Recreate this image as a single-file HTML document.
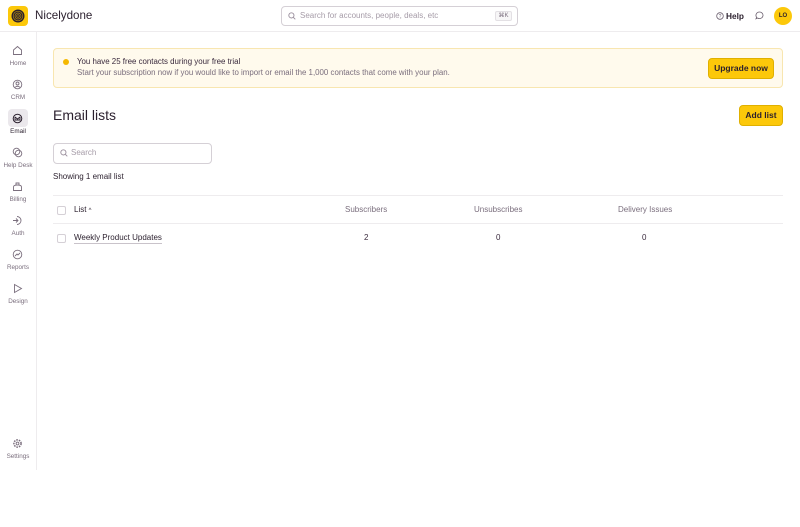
<!DOCTYPE html>
<html><head><style>
*{box-sizing:border-box;margin:0;padding:0}
body{width:800px;height:527px;background:#fff;font-family:"Liberation Sans",sans-serif;color:#2a1f2d;position:relative;overflow:hidden;line-height:1}
.a{position:absolute;white-space:nowrap}
.hdr{left:0;top:0;width:800px;height:32px;border-bottom:1px solid #eeecee}
.side{left:0;top:32px;width:37px;height:438px;border-right:1px solid #eeecee}
.ic{position:absolute;left:12px}
.lb{position:absolute;left:0;width:36px;text-align:center;font-size:6.3px;color:#7a6e7d}
.btn{background:#fcc80a;border:1px solid #e0b000;border-radius:4px;font-size:8.5px;font-weight:bold;color:#2a1f2d;text-align:center}
.th{font-size:8px;color:#7a6e7d}
.cb{width:9px;height:9px;border:1px solid #d5d0d6;border-radius:2px}
</style></head><body>
<div class="a hdr"></div>
<div class="a" style="left:8px;top:6px;width:20px;height:20px;background:#fcc80a;border-radius:4px">
<svg width="20" height="20" viewBox="0 0 20 20"><circle cx="10" cy="10" r="6.5" fill="#2a1f2d"/><circle cx="10" cy="10" r="4.8" fill="none" stroke="#b08a10" stroke-width=".7"/><circle cx="10" cy="10" r="3" fill="none" stroke="#b08a10" stroke-width=".7"/><circle cx="10" cy="10" r="1.3" fill="none" stroke="#b08a10" stroke-width=".7"/></svg></div>
<div class="a" style="left:35px;top:10px;font-size:11.6px">Nicelydone</div>
<div class="a" style="left:281px;top:6px;width:237px;height:20px;border:1px solid #d5d0d6;border-radius:4px"></div>
<svg class="a" style="left:288px;top:12px" width="8" height="8" viewBox="0 0 8 8"><circle cx="3.4" cy="3.4" r="2.6" fill="none" stroke="#9a8f9d" stroke-width=".9"/><path d="M5.3 5.3L7.3 7.3" stroke="#9a8f9d" stroke-width=".9"/></svg>
<div class="a" style="left:300px;top:12px;font-size:8px;color:#a69ca8">Search for accounts, people, deals, etc</div>
<div class="a" style="left:495px;top:11px;width:17px;height:10px;border:1px solid #e3e0e4;border-radius:2px;font-size:6px;color:#7a6e7d;text-align:center;line-height:8px;background:#f7f6f7">⌘K</div>
<svg class="a" style="left:716px;top:12px" width="8" height="8" viewBox="0 0 8 8"><circle cx="4" cy="4" r="3.3" fill="none" stroke="#6b5f6e" stroke-width=".8"/><text x="4" y="5.8" font-size="5" text-anchor="middle" fill="#6b5f6e">?</text></svg>
<div class="a" style="left:726px;top:12px;font-size:8.3px;font-weight:bold">Help</div>
<svg class="a" style="left:755px;top:11px" width="9" height="9" viewBox="0 0 9 9"><path d="M4.5 1a3.5 3.3 0 1 1-2 6L1 7.8l.6-1.6A3.5 3.3 0 0 1 4.5 1z" fill="none" stroke="#6b5f6e" stroke-width=".8"/></svg>
<div class="a" style="left:774px;top:7px;width:18px;height:18px;border-radius:50%;background:#fcc80a;font-size:6px;font-weight:bold;text-align:center;line-height:18px">LO</div>

<div class="a side"></div>
<div class="a" style="left:8px;top:109px;width:20px;height:18px;background:#ebe8ec;border-radius:4px"></div>
<svg class="ic" style="top:45px" width="11" height="11" viewBox="0 0 11 11"><path d="M1.5 5L5.5 1.5 9.5 5v4.5h-8z" fill="none" stroke="#7a6e7d" stroke-width=".9"/></svg><div class="lb" style="top:61px">Home</div>
<svg class="ic" style="top:79px" width="11" height="11" viewBox="0 0 11 11"><circle cx="5.5" cy="5.5" r="4.3" fill="none" stroke="#7a6e7d" stroke-width=".9"/><circle cx="5.5" cy="4.5" r="1.5" fill="none" stroke="#7a6e7d" stroke-width=".9"/><path d="M3 8.3q2.5-2 5 0" fill="none" stroke="#7a6e7d" stroke-width=".9"/></svg><div class="lb" style="top:95px">CRM</div>
<svg class="ic" style="top:113px" width="11" height="11" viewBox="0 0 11 11"><circle cx="5.5" cy="5.5" r="4.3" fill="none" stroke="#2a1f2d" stroke-width="1"/><path d="M3 4l2.5 2 2.5-2M3 4v3h5V4" fill="none" stroke="#2a1f2d" stroke-width=".9"/></svg><div class="lb" style="top:129px;color:#2a1f2d">Email</div>
<svg class="ic" style="top:147px" width="11" height="11" viewBox="0 0 11 11"><circle cx="4.5" cy="4.5" r="3.3" fill="none" stroke="#7a6e7d" stroke-width=".9"/><circle cx="6.5" cy="6.5" r="3.3" fill="none" stroke="#7a6e7d" stroke-width=".9"/></svg><div class="lb" style="top:163px">Help Desk</div>
<svg class="ic" style="top:181px" width="11" height="11" viewBox="0 0 11 11"><path d="M1.5 9.5h8V6q0-2-4-2t-4 2z M4 4V2h3v2" fill="none" stroke="#7a6e7d" stroke-width=".9"/></svg><div class="lb" style="top:197px">Billing</div>
<svg class="ic" style="top:215px" width="11" height="11" viewBox="0 0 11 11"><path d="M5 1.5a4 4 0 1 1 0 8M1 5.5h5M4 3.5l2 2-2 2" fill="none" stroke="#7a6e7d" stroke-width=".9"/></svg><div class="lb" style="top:231px">Auth</div>
<svg class="ic" style="top:249px" width="11" height="11" viewBox="0 0 11 11"><circle cx="5.5" cy="5.5" r="4.3" fill="none" stroke="#7a6e7d" stroke-width=".9"/><path d="M3 7l2-2 1 1 2-2" fill="none" stroke="#7a6e7d" stroke-width=".9"/></svg><div class="lb" style="top:265px">Reports</div>
<svg class="ic" style="top:283px" width="11" height="11" viewBox="0 0 11 11"><path d="M2.5 1.5l7 4-7 4z" fill="none" stroke="#7a6e7d" stroke-width=".9"/></svg><div class="lb" style="top:299px">Design</div>
<svg class="ic" style="top:438px" width="11" height="11" viewBox="0 0 11 11"><circle cx="5.5" cy="5.5" r="3.6" fill="none" stroke="#7a6e7d" stroke-width="1.5" stroke-dasharray="1.6 1"/><circle cx="5.5" cy="5.5" r="1.4" fill="none" stroke="#7a6e7d" stroke-width=".9"/></svg><div class="lb" style="top:454px">Settings</div>

<div class="a" style="left:53px;top:48px;width:730px;height:40px;background:#fffaed;border:1px solid #f8e6b0;border-radius:4px"></div>
<div class="a" style="left:63px;top:59px;width:6px;height:6px;border-radius:50%;background:#f5b800"></div>
<div class="a" style="left:77px;top:58px;font-size:7.9px;color:#3a2a3d">You have 25 free contacts during your free trial</div>
<div class="a" style="left:77px;top:69px;font-size:7.9px;color:#7a6e7d">Start your subscription now if you would like to import or email the 1,000 contacts that come with your plan.</div>
<div class="a btn" style="left:708px;top:58px;width:66px;height:21px;line-height:19px">Upgrade now</div>

<div class="a" style="left:53px;top:108px;font-size:14px">Email lists</div>
<div class="a btn" style="left:739px;top:105px;width:44px;height:21px;line-height:19px">Add list</div>

<div class="a" style="left:53px;top:143px;width:159px;height:21px;border:1px solid #d5d0d6;border-radius:4px"></div>
<svg class="a" style="left:60px;top:149px" width="8" height="8" viewBox="0 0 8 8"><circle cx="3.4" cy="3.4" r="2.6" fill="none" stroke="#9a8f9d" stroke-width=".9"/><path d="M5.3 5.3L7.3 7.3" stroke="#9a8f9d" stroke-width=".9"/></svg>
<div class="a" style="left:71px;top:149px;font-size:8px;color:#a69ca8">Search</div>
<div class="a" style="left:53px;top:173px;font-size:8px">Showing 1 email list</div>

<div class="a" style="left:53px;top:195px;width:730px;height:1px;background:#eeecee"></div>
<div class="a" style="left:53px;top:223px;width:730px;height:1px;background:#eeecee"></div>
<div class="a cb" style="left:57px;top:206px"></div>
<div class="a" style="left:74px;top:206px;font-size:8px">List <span style="font-size:6px">^</span></div>
<div class="a th" style="left:345px;top:206px">Subscribers</div>
<div class="a th" style="left:474px;top:206px">Unsubscribes</div>
<div class="a th" style="left:618px;top:206px">Delivery Issues</div>
<div class="a cb" style="left:57px;top:234px"></div>
<div class="a" style="left:74px;top:234px;font-size:8px;border-bottom:1px solid #c9c3ca;padding-bottom:1px">Weekly Product Updates</div>
<div class="a th" style="left:364px;top:234px;color:#3a2a3d">2</div>
<div class="a th" style="left:496px;top:234px;color:#3a2a3d">0</div>
<div class="a th" style="left:642px;top:234px;color:#3a2a3d">0</div>
</body></html>
